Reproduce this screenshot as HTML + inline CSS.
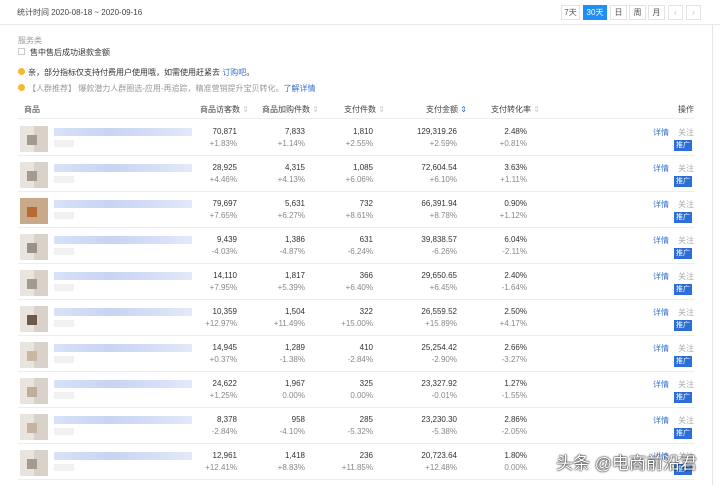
<!DOCTYPE html><html><head><meta charset="utf-8"><style>
*{margin:0;padding:0;box-sizing:border-box}
body{width:720px;height:485px;overflow:hidden;background:#fff;font-family:"Liberation Sans","Noto Sans CJK SC",sans-serif;font-size:8px;color:#333;position:relative}
.a{position:absolute;white-space:nowrap}
.top{position:absolute;left:0;top:0;width:720px;height:25px;border-bottom:1px solid #e8e8e8}
.btn{position:absolute;top:5px;height:15px;border:1px solid #e3e3e3;font-size:8px;line-height:13px;text-align:center;color:#555;background:#fff}
.g{color:#999}
.dot{position:absolute;width:7px;height:7px;border-radius:50%;background:#f5b82e}
.row{position:absolute;left:18px;width:676px;height:36px;border-bottom:1px solid #eee}
.img{position:absolute;left:2px;top:6px;width:28px;height:26px;background:linear-gradient(90deg,#e9e4de 50%,#d8d2ca 50%)}
.img i{position:absolute;left:7px;top:9px;width:10px;height:10px;background:#a49a8e}
.bar{position:absolute;left:36px;top:8px;width:138px;height:8px;background:linear-gradient(90deg,#d8e2f7,#c8d4f3 40%,#d4ddf6 70%,#e3e9f8)}
.bar2{position:absolute;left:36px;top:20px;width:20px;height:7px;background:#f1f1f1}
.n{position:absolute;text-align:right;width:80px;font-size:8px;line-height:12px}
.n b{font-weight:normal;display:block;color:#333}
.n s{text-decoration:none;display:block;color:#888}
.xq{position:absolute;left:635px;top:7px;color:#3a6fd0}
.gz{position:absolute;left:660px;top:7px;color:#aaa}
.tg{position:absolute;left:656px;top:20px;width:18px;height:11px;background:#2d6fd8;color:#fff;font-size:7px;line-height:11px;text-align:center}
</style></head><body>
<div class="top"></div>
<div class="a" style="left:17px;top:7px;color:#444">统计时间 2020-08-18 ~ 2020-09-16</div>
<div class="btn" style="left:561px;width:19px">7天</div>
<div class="btn" style="left:583px;width:24px;background:#1f8ef5;border-color:#1f8ef5;color:#fff">30天</div>
<div class="btn" style="left:610px;width:17px">日</div>
<div class="btn" style="left:629px;width:17px">周</div>
<div class="btn" style="left:648px;width:17px">月</div>
<div class="btn" style="left:668px;width:15px;color:#bbb">‹</div>
<div class="btn" style="left:686px;width:15px;color:#bbb">›</div>
<div class="a g" style="left:18px;top:35px">服务类</div>
<div class="a" style="left:18px;top:48px;width:7px;height:7px;border:1px solid #ccc"></div>
<div class="a" style="left:30px;top:47px">售中售后成功退款金额</div>
<div class="dot" style="left:18px;top:68px"></div>
<div class="a" style="left:28px;top:67px">亲，部分指标仅支持付费用户使用哦，如需使用赶紧去 <span style="color:#3a6fd0">订购吧</span>。</div>
<div class="dot" style="left:18px;top:84px"></div>
<div class="a g" style="left:28px;top:83px">【人群推荐】 爆款潜力人群圈选-应用-再追踪，精准营销提升宝贝转化。<span style="color:#3a6fd0">了解详情</span></div>
<div class="a" style="left:18px;top:97px;width:676px;height:22px;border-bottom:1px solid #eee"></div>
<div class="a" style="left:24px;top:104px;color:#444">商品</div>
<div class="a" style="left:200px;top:104px;color:#444">商品访客数 <span style="color:#ccc">⇕</span></div>
<div class="a" style="left:262px;top:104px;color:#444">商品加购件数 <span style="color:#ccc">⇕</span></div>
<div class="a" style="left:344px;top:104px;color:#444">支付件数 <span style="color:#ccc">⇕</span></div>
<div class="a" style="left:426px;top:104px;color:#444">支付金额 <span style="color:#3a6fd0">⇕</span></div>
<div class="a" style="left:491px;top:104px;color:#444">支付转化率 <span style="color:#ccc">⇕</span></div>
<div class="a" style="left:678px;top:104px;color:#444">操作</div>

<div class="row" style="top:120px"><div class="img"><i></i></div><div class="bar"></div><div class="bar2"></div>
<div class="n" style="left:139px;top:6px"><b>70,871</b><s>+1.83%</s></div><div class="n" style="left:207px;top:6px"><b>7,833</b><s>+1.14%</s></div><div class="n" style="left:275px;top:6px"><b>1,810</b><s>+2.55%</s></div><div class="n" style="left:359px;top:6px"><b>129,319.26</b><s>+2.59%</s></div><div class="n" style="left:429px;top:6px"><b>2.48%</b><s>+0.81%</s></div>
<div class="xq">详情</div><div class="gz">关注</div><div class="tg">推广</div></div>
<div class="row" style="top:156px"><div class="img"><i></i></div><div class="bar"></div><div class="bar2"></div>
<div class="n" style="left:139px;top:6px"><b>28,925</b><s>+4.46%</s></div><div class="n" style="left:207px;top:6px"><b>4,315</b><s>+4.13%</s></div><div class="n" style="left:275px;top:6px"><b>1,085</b><s>+6.06%</s></div><div class="n" style="left:359px;top:6px"><b>72,604.54</b><s>+6.10%</s></div><div class="n" style="left:429px;top:6px"><b>3.63%</b><s>+1.11%</s></div>
<div class="xq">详情</div><div class="gz">关注</div><div class="tg">推广</div></div>
<div class="row" style="top:192px"><div class="img" style="background:#c8a98a"><i style="background:#b86a35"></i></div><div class="bar"></div><div class="bar2"></div>
<div class="n" style="left:139px;top:6px"><b>79,697</b><s>+7.65%</s></div><div class="n" style="left:207px;top:6px"><b>5,631</b><s>+6.27%</s></div><div class="n" style="left:275px;top:6px"><b>732</b><s>+8.61%</s></div><div class="n" style="left:359px;top:6px"><b>66,391.94</b><s>+8.78%</s></div><div class="n" style="left:429px;top:6px"><b>0.90%</b><s>+1.12%</s></div>
<div class="xq">详情</div><div class="gz">关注</div><div class="tg">推广</div></div>
<div class="row" style="top:228px"><div class="img"><i style="background:#9a9288"></i></div><div class="bar"></div><div class="bar2"></div>
<div class="n" style="left:139px;top:6px"><b>9,439</b><s>-4.03%</s></div><div class="n" style="left:207px;top:6px"><b>1,386</b><s>-4.87%</s></div><div class="n" style="left:275px;top:6px"><b>631</b><s>-6.24%</s></div><div class="n" style="left:359px;top:6px"><b>39,838.57</b><s>-6.26%</s></div><div class="n" style="left:429px;top:6px"><b>6.04%</b><s>-2.11%</s></div>
<div class="xq">详情</div><div class="gz">关注</div><div class="tg">推广</div></div>
<div class="row" style="top:264px"><div class="img"><i></i></div><div class="bar"></div><div class="bar2"></div>
<div class="n" style="left:139px;top:6px"><b>14,110</b><s>+7.95%</s></div><div class="n" style="left:207px;top:6px"><b>1,817</b><s>+5.39%</s></div><div class="n" style="left:275px;top:6px"><b>366</b><s>+6.40%</s></div><div class="n" style="left:359px;top:6px"><b>29,650.65</b><s>+6.45%</s></div><div class="n" style="left:429px;top:6px"><b>2.40%</b><s>-1.64%</s></div>
<div class="xq">详情</div><div class="gz">关注</div><div class="tg">推广</div></div>
<div class="row" style="top:300px"><div class="img"><i style="background:#6e5a4c"></i></div><div class="bar"></div><div class="bar2"></div>
<div class="n" style="left:139px;top:6px"><b>10,359</b><s>+12.97%</s></div><div class="n" style="left:207px;top:6px"><b>1,504</b><s>+11.49%</s></div><div class="n" style="left:275px;top:6px"><b>322</b><s>+15.00%</s></div><div class="n" style="left:359px;top:6px"><b>26,559.52</b><s>+15.89%</s></div><div class="n" style="left:429px;top:6px"><b>2.50%</b><s>+4.17%</s></div>
<div class="xq">详情</div><div class="gz">关注</div><div class="tg">推广</div></div>
<div class="row" style="top:336px"><div class="img"><i style="background:#c8b8a0"></i></div><div class="bar"></div><div class="bar2"></div>
<div class="n" style="left:139px;top:6px"><b>14,945</b><s>+0.37%</s></div><div class="n" style="left:207px;top:6px"><b>1,289</b><s>-1.38%</s></div><div class="n" style="left:275px;top:6px"><b>410</b><s>-2.84%</s></div><div class="n" style="left:359px;top:6px"><b>25,254.42</b><s>-2.90%</s></div><div class="n" style="left:429px;top:6px"><b>2.66%</b><s>-3.27%</s></div>
<div class="xq">详情</div><div class="gz">关注</div><div class="tg">推广</div></div>
<div class="row" style="top:372px"><div class="img"><i style="background:#c0ae98"></i></div><div class="bar"></div><div class="bar2"></div>
<div class="n" style="left:139px;top:6px"><b>24,622</b><s>+1.25%</s></div><div class="n" style="left:207px;top:6px"><b>1,967</b><s>0.00%</s></div><div class="n" style="left:275px;top:6px"><b>325</b><s>0.00%</s></div><div class="n" style="left:359px;top:6px"><b>23,327.92</b><s>-0.01%</s></div><div class="n" style="left:429px;top:6px"><b>1.27%</b><s>-1.55%</s></div>
<div class="xq">详情</div><div class="gz">关注</div><div class="tg">推广</div></div>
<div class="row" style="top:408px"><div class="img"><i style="background:#c4b5a2"></i></div><div class="bar"></div><div class="bar2"></div>
<div class="n" style="left:139px;top:6px"><b>8,378</b><s>-2.84%</s></div><div class="n" style="left:207px;top:6px"><b>958</b><s>-4.10%</s></div><div class="n" style="left:275px;top:6px"><b>285</b><s>-5.32%</s></div><div class="n" style="left:359px;top:6px"><b>23,230.30</b><s>-5.38%</s></div><div class="n" style="left:429px;top:6px"><b>2.86%</b><s>-2.05%</s></div>
<div class="xq">详情</div><div class="gz">关注</div><div class="tg">推广</div></div>
<div class="row" style="top:444px"><div class="img"><i></i></div><div class="bar"></div><div class="bar2"></div>
<div class="n" style="left:139px;top:6px"><b>12,961</b><s>+12.41%</s></div><div class="n" style="left:207px;top:6px"><b>1,418</b><s>+8.83%</s></div><div class="n" style="left:275px;top:6px"><b>236</b><s>+11.85%</s></div><div class="n" style="left:359px;top:6px"><b>20,723.64</b><s>+12.48%</s></div><div class="n" style="left:429px;top:6px"><b>1.80%</b><s>0.00%</s></div>
<div class="xq">详情</div><div class="gz">关注</div><div class="tg">推广</div></div>
<div class="a" style="left:712px;top:25px;width:1px;height:460px;background:#e6e6e6"></div>
<div class="a" style="left:556px;top:449px;font-size:17px;color:#fff;text-shadow:0 0 2px #000,0 0 1px #000">头条 @电商前沿君</div>
</body></html>
